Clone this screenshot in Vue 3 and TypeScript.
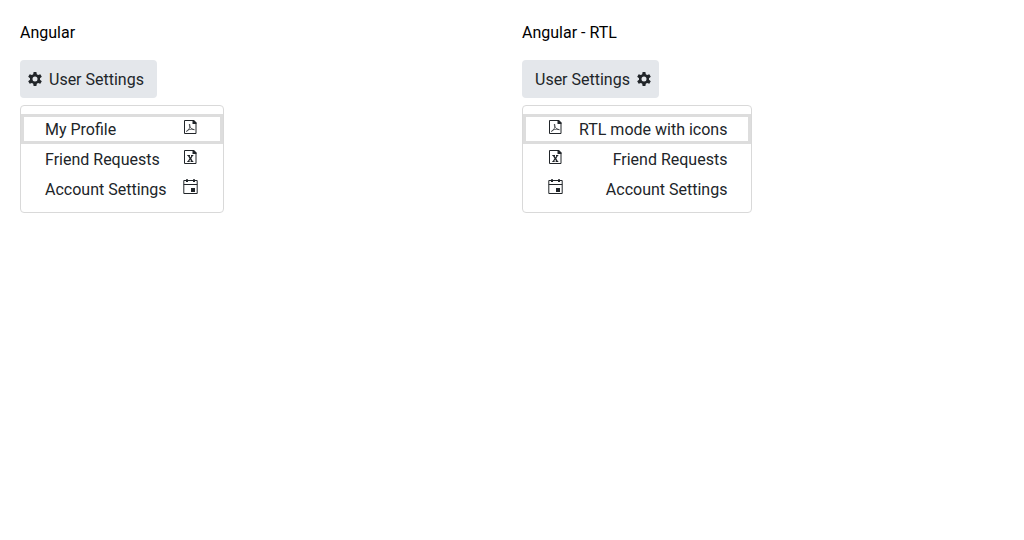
<script setup lang="ts">
type IconName = 'pdf' | 'excel' | 'calendar'
interface MenuItem { label: string; icon: IconName }
interface Demo { title: string; dir: 'ltr' | 'rtl'; items: MenuItem[] }

const demos: Demo[] = [
  {
    title: 'Angular',
    dir: 'ltr',
    items: [
      { label: 'My Profile', icon: 'pdf' },
      { label: 'Friend Requests', icon: 'excel' },
      { label: 'Account Settings', icon: 'calendar' },
    ],
  },
  {
    title: 'Angular - RTL',
    dir: 'rtl',
    items: [
      { label: 'RTL mode with icons', icon: 'pdf' },
      { label: 'Friend Requests', icon: 'excel' },
      { label: 'Account Settings', icon: 'calendar' },
    ],
  },
]
</script>

<template>
  <main class="page">
    <section v-for="demo in demos" :key="demo.title" class="demo">
      <h2 class="title">{{ demo.title }}</h2>
      <button class="trigger" type="button" :dir="demo.dir" aria-haspopup="menu" aria-expanded="true">
        <svg class="icon trigger-icon" viewBox="0 0 16 16" aria-hidden="true">
          <path fill="currentColor" fill-rule="evenodd" d="M6.600 1h2.800l.4 2.200 1.300.8 2.200-.8 1.500 2.500-1.800 1.500v1.600l1.800 1.500-1.500 2.500-2.200-.8-1.300.8-.4 2.200H6.600l-.4-2.200-1.300-.8-2.200.8-1.500-2.500L3 8.800V7.200L1.200 5.700l1.500-2.500 2.200.8 1.300-.8zM8 5.500a2.500 2.500 0 1 0 0 5 2.500 2.500 0 0 0 0-5z" />
        </svg>
        <span>User Settings</span>
      </button>
      <div class="menu" role="menu" :dir="demo.dir">
        <button
          v-for="(item, index) in demo.items"
          :key="item.label"
          class="item"
          :class="{ focused: index === 0, mirrored: demo.dir === 'rtl' }"
          type="button"
          role="menuitem"
        >
          <span>{{ item.label }}</span>
          <svg class="icon item-icon" viewBox="0 0 16 16" aria-hidden="true">
            <template v-if="item.icon !== 'calendar'">
              <path fill="none" stroke="currentColor" d="M1.500 1.500H10l3 3v10H1.500z" />
              <path fill="currentColor" d="M9.500 1h1.500l2.500 2.500V5h-4z" />
            </template>
            <path v-if="item.icon === 'pdf'" fill="none" stroke="currentColor" stroke-width=".7" d="M6.500 5c-.7 1.600 1.200 5.200 5 5.800M6.500 5c1.200 2.300-.3 6.200-3.200 7.500M3.300 12.300c1.700-1.800 4.700-2.500 8-1.800" />
            <path v-if="item.icon === 'excel'" fill="currentColor" d="M4.300 6H7v.9h-.3l.8 1.500.8-1.500H8V6h2.300v.9h-.6L8.300 9.500l1.400 2.600h.6v.9H7.600v-.9h.4l-.8-1.500-.9 1.500h.4v.9H4.300v-.9h.6l1.600-2.600L5 6.900h-.7z" />
            <template v-if="item.icon === 'calendar'">
              <path fill="none" stroke="currentColor" d="M.8 1.500h13.400v13H.8zM.8 5.500h13.400" />
              <path fill="currentColor" d="M3 .3h2V3H3zM10 .3h2V3h-2zM8 9h4v4H8z" />
            </template>
          </svg>
        </button>
      </div>
    </section>
  </main>
</template>

<style>
body {
  margin: 0;
  background: #fff;
}
</style>

<style scoped>
.page {
  display: grid;
  grid-template-columns: 1fr 1fr;
  gap: 20px;
  padding: 21px 20px 20px;
  font: 16px/24px Roboto, sans-serif;
  color: #000;
}
.demo {
  display: flex;
  flex-direction: column;
  align-items: flex-start;
}
.title {
  margin: 0 0 15px;
  font-size: 16px;
  font-weight: 400;
}
.trigger {
  display: flex;
  align-items: flex-start;
  gap: 6px;
  padding: 8px 0 6px;
  padding-inline: 7px 13px;
  border: 0;
  border-radius: 4px;
  background: #e4e7eb;
  color: #212529;
  font: inherit;
}
.icon {
  display: block;
  flex: none;
  width: 16px;
  height: 16px;
}
.trigger-icon {
  margin-top: 3px;
}
.menu {
  display: flex;
  flex-direction: column;
  margin-top: 7px;
  padding: 8px 0;
  border: 1px solid #d9d9d9;
  border-radius: 4px;
}
.item {
  display: flex;
  justify-content: space-between;
  gap: 16px;
  padding: 4px 24px 2px;
  border: 0;
  background: #fff;
  color: #212529;
  font: inherit;
  text-align: start;
}
.mirrored {
  gap: 15px;
  padding-left: 25px;
}
.item-icon {
  margin-top: 1px;
}
.focused {
  box-shadow: inset 0 0 0 3px #ddd;
}
</style>
